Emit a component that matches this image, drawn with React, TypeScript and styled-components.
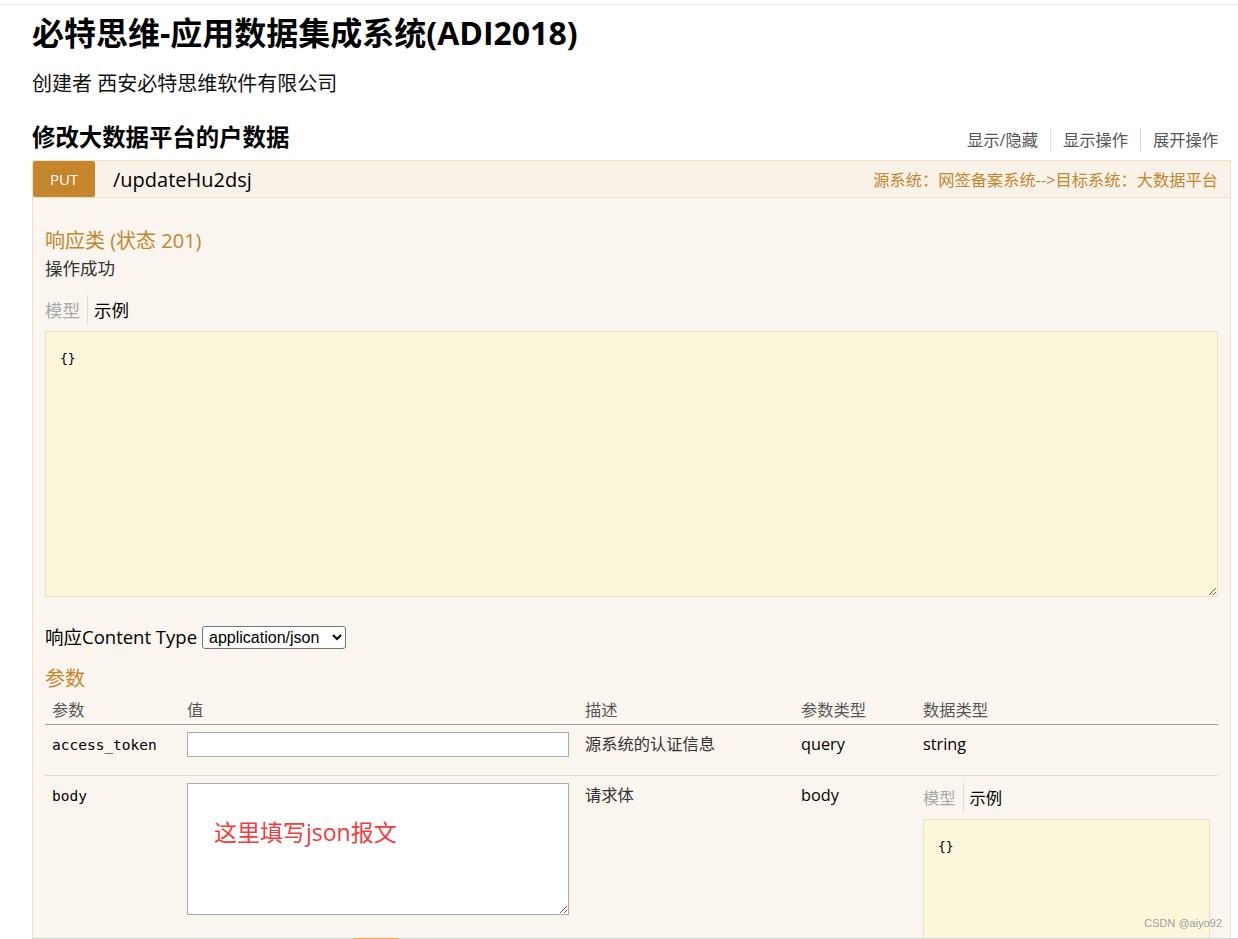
import React from "react";
import styled, { createGlobalStyle } from "styled-components";

const ORANGE = "#c5862b";
const SANS = `"Open Sans", "Noto Sans CJK SC", sans-serif`;
const MONO = `"DejaVu Sans Mono", "Noto Sans CJK SC", monospace`;

const GlobalStyle = createGlobalStyle`
  html, body { margin: 0; padding: 0; background: #fff; }
  body { font-family: ${SANS}; color: #000; }
  * { box-sizing: border-box; }
`;

const TopRule = styled.div`
  height: 5px;
  border-bottom: 1px solid #e2e2e2;
`;

const Page = styled.main`
  padding: 0 7px 0 32px;
`;

const Title = styled.h1`
  margin: 0;
  padding-top: 8px;
  font-size: 32px;
  font-weight: 700;
  line-height: 40px;
`;

const Creator = styled.p`
  margin: 17px 0 0;
  font-size: 20px;
  line-height: 28px;
  color: #111;
`;

const SectionBar = styled.div`
  display: flex;
  justify-content: space-between;
  align-items: flex-end;
  margin-top: 24px;
`;

const SectionTitle = styled.h2`
  margin: 0;
  font-size: 23.4px;
  font-weight: 700;
  line-height: 30px;
`;

const Options = styled.ul`
  display: flex;
  list-style: none;
  margin: 0;
  padding: 0 13px 0 0;
`;

const Option = styled.li`
  font-size: 16.25px;
  line-height: 24px;
  color: #555;
  padding: 0 12px;
  border-left: 1px solid #ddd;
  &:first-child { border-left: none; }
  &:last-child { padding-right: 0; }
`;

const Operation = styled.section`
  margin-top: 8px;
`;

const OpHeading = styled.div`
  display: flex;
  align-items: center;
  background: #f9f2e9;
  border: 1px solid #f0e0ca;
  height: 38px;
`;

const MethodBadge = styled.span`
  display: flex;
  align-items: center;
  justify-content: center;
  width: 62px;
  height: 36px;
  background: ${ORANGE};
  color: #fff;
  border-radius: 2px;
  font-size: 15px;
`;

const OpPath = styled.span`
  margin-left: 18px;
  font-size: 20px;
  color: #000;
`;

const OpSummary = styled.span`
  margin-left: auto;
  padding-right: 12px;
  font-size: 16.25px;
  color: ${ORANGE};
`;

const OpContent = styled.div`
  background: #faf5ee;
  border: 1px solid #f0e0ca;
  border-top: none;
  padding: 29px 12px 40px;
`;

const ResponseTitle = styled.h4`
  margin: 0;
  font-size: 20px;
  font-weight: 400;
  line-height: 28px;
  color: ${ORANGE};
`;

const Description = styled.p`
  margin: 1px 0 0;
  font-size: 17.5px;
  line-height: 24px;
  color: #333;
`;

const SignatureTabs = styled.div<{ $size: number; $top: number }>`
  display: flex;
  margin-top: ${(p) => p.$top}px;
  font-size: ${(p) => p.$size}px;
  line-height: 30px;
`;

const Tab = styled.span<{ $active?: boolean }>`
  color: ${(p) => (p.$active ? "#000" : "#a8a8a8")};
  padding: 0 7px 0 0;
  & + & {
    padding: 0 0 0 6px;
    border-left: 1px solid #ddd;
  }
`;

const SampleBox = styled.div<{ $height: number }>`
  margin-top: 6px;
  height: ${(p) => p.$height}px;
  background: #fcf6db;
  border: 1px solid #e5e0c6;
  padding: 18px 14px 16px;
  font-family: ${MONO};
  font-size: 13px;
  line-height: 18px;
  overflow: auto;
  resize: vertical;
`;

const ContentTypeRow = styled.div`
  display: flex;
  align-items: center;
  margin-top: 26px;
  font-size: 18.5px;
  line-height: 28px;
`;

const Select = styled.select`
  margin-left: 5px;
  width: 144px;
  height: 23px;
  font-family: "Liberation Sans", Arial, sans-serif;
  font-size: 16px;
  color: #000;
  background: #fff;
  border: 1px solid #767676;
  border-radius: 3px;
  padding: 0 2px;
`;

const ParamsTitle = styled.h4`
  margin: 14px 0 0;
  font-size: 20px;
  font-weight: 400;
  line-height: 28px;
  color: ${ORANGE};
`;

const Row = styled.div<{ $head?: boolean }>`
  display: grid;
  grid-template-columns: 135px 398px 216px 122px 1fr;
  border-bottom: 1px solid ${(p) => (p.$head ? "#9a9a9a" : "#d8d8d8")};
  &:last-child { border-bottom: none; }
`;

const HeadCell = styled.div`
  padding: 5px 0 2px 7px;
  font-size: 16.25px;
  line-height: 24px;
  color: #555;
`;

const Cell = styled.div<{ $muted?: boolean }>`
  padding: 7px 8px 18px 7px;
  font-size: 16.25px;
  line-height: 24px;
  color: ${(p) => (p.$muted ? "#333" : "#000")};
`;

const MonoName = styled.span`
  font-family: ${MONO};
  font-size: 14.5px;
`;

const ValueInput = styled.input`
  display: block;
  width: 382px;
  height: 25px;
  margin: 0;
  border: 1px solid #aaa;
  background: #fff;
`;

const BodyTextarea = styled.textarea`
  display: block;
  width: 382px;
  height: 132px;
  margin: 0;
  border: 1px solid #aaa;
  background: #fff;
  padding: 33px 26px;
  font-family: ${SANS};
  font-size: 23px;
  line-height: 30px;
  color: #f43c3c;
  resize: both;
  outline: none;
`;

const Watermark = styled.div`
  position: fixed;
  right: 16px;
  bottom: 9px;
  font-family: "Liberation Sans", Arial, sans-serif;
  font-size: 11px;
  line-height: 14px;
  color: #9a9a9a;
`;

const BottomEdge = styled.div`
  position: fixed;
  left: 32px;
  right: 0;
  bottom: 0;
  height: 1px;
  background: #d6d6d6;
  &::after {
    content: "";
    position: absolute;
    left: 321px;
    width: 46px;
    top: 0;
    height: 1px;
    background: #ffa54f;
  }
`;

export default function App() {
  return (
    <>
      <GlobalStyle />
      <TopRule />
      <Page>
        <Title>必特思维-应用数据集成系统(ADI2018)</Title>
        <Creator>创建者 西安必特思维软件有限公司</Creator>
        <SectionBar>
          <SectionTitle>修改大数据平台的户数据</SectionTitle>
          <Options>
            <Option>显示/隐藏</Option>
            <Option>显示操作</Option>
            <Option>展开操作</Option>
          </Options>
        </SectionBar>
        <Operation>
          <OpHeading>
            <MethodBadge>PUT</MethodBadge>
            <OpPath>/updateHu2dsj</OpPath>
            <OpSummary>源系统：网签备案系统--&gt;目标系统：大数据平台</OpSummary>
          </OpHeading>
          <OpContent>
            <ResponseTitle>响应类 (状态 201)</ResponseTitle>
            <Description>操作成功</Description>
            <SignatureTabs $size={17.5} $top={15}>
              <Tab>模型</Tab>
              <Tab $active>示例</Tab>
            </SignatureTabs>
            <SampleBox $height={266}>{"{}"}</SampleBox>
            <ContentTypeRow>
              响应Content Type
              <Select defaultValue="application/json">
                <option value="application/json">application/json</option>
              </Select>
            </ContentTypeRow>
            <ParamsTitle>参数</ParamsTitle>
            <div>
              <Row $head>
                <HeadCell>参数</HeadCell>
                <HeadCell>值</HeadCell>
                <HeadCell>描述</HeadCell>
                <HeadCell>参数类型</HeadCell>
                <HeadCell>数据类型</HeadCell>
              </Row>
              <Row>
                <Cell><MonoName>access_token</MonoName></Cell>
                <Cell><ValueInput type="text" /></Cell>
                <Cell $muted>源系统的认证信息</Cell>
                <Cell>query</Cell>
                <Cell>string</Cell>
              </Row>
              <Row>
                <Cell><MonoName>body</MonoName></Cell>
                <Cell><BodyTextarea defaultValue="这里填写json报文" /></Cell>
                <Cell $muted>请求体</Cell>
                <Cell>body</Cell>
                <Cell>
                  <SignatureTabs $size={16.25} $top={0}>
                    <Tab>模型</Tab>
                    <Tab $active>示例</Tab>
                  </SignatureTabs>
                  <SampleBox $height={200}>{"{}"}</SampleBox>
                </Cell>
              </Row>
            </div>
          </OpContent>
        </Operation>
      </Page>
      <BottomEdge />
      <Watermark>CSDN @aiyo92</Watermark>
    </>
  );
}
